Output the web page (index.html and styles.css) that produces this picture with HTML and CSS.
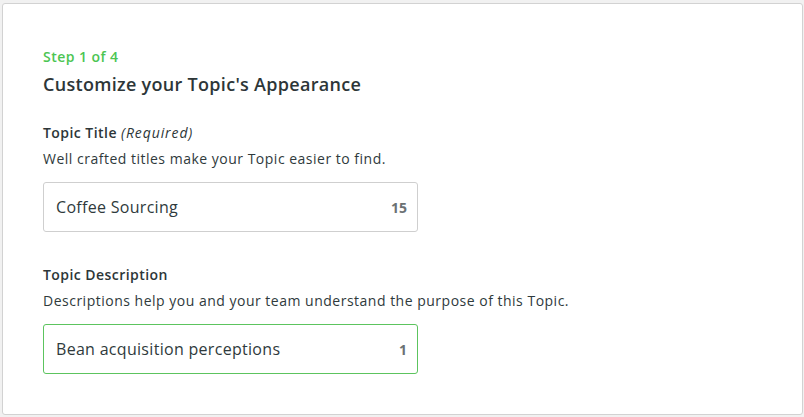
FILE: index.html
```html
<!DOCTYPE html>
<html>
<head>
<meta charset="utf-8">
<link rel="stylesheet" href="styles.css">
</head>
<body>
<div class="card">
  <div class="step">Step 1 of 4</div>
  <h1 class="heading">Customize your Topic's Appearance</h1>

  <div class="field">
    <div class="label">Topic Title <em>(Required)</em></div>
    <div class="help">Well crafted titles make your Topic easier to find.</div>
    <div class="input">
      <span class="value">Coffee Sourcing</span>
      <span class="count">15</span>
    </div>
  </div>

  <div class="field">
    <div class="label">Topic Description</div>
    <div class="help">Descriptions help you and your team understand the purpose of this Topic.</div>
    <div class="input input-active">
      <span class="value">Bean acquisition perceptions</span>
      <span class="count">1</span>
    </div>
  </div>
</div>
</body>
</html>
```

FILE: styles.css
```css
html, body {
  margin: 0;
  padding: 0;
}
body {
  background: #f1f1f1;
  padding: 3px 1px 2px 2px;
  font-family: "Open Sans", "Liberation Sans", sans-serif;
  color: #2f3a3c;
  box-sizing: border-box;
  height: 417px;
}
.card {
  box-sizing: border-box;
  height: 412px;
  background: #fff;
  border: 1px solid #d2d2d2;
  border-radius: 3px;
  padding: 44px 40px 0 40px;
}
.step {
  color: #4cc552;
  font-size: 14px;
  font-weight: 600;
  line-height: 18px;
  letter-spacing: 0.45px;
}
.heading {
  margin: 7px 0 0;
  font-size: 18px;
  font-weight: 600;
  line-height: 23px;
  letter-spacing: 0.3px;
  color: #2d3638;
}
.field {
  margin-top: 28px;
}
.field + .field {
  margin-top: 34px;
}
.label {
  font-size: 14px;
  font-weight: 600;
  line-height: 18px;
  letter-spacing: 0.45px;
  color: #2d3638;
}
.label em {
  font-weight: 400;
  font-style: italic;
  letter-spacing: 0.9px;
}
.help {
  margin-top: 8px;
  font-size: 14px;
  line-height: 18px;
  letter-spacing: 0.5px;
  color: #2f3a3c;
}
.input {
  margin-top: 14px;
  box-sizing: border-box;
  width: 375px;
  height: 50px;
  border: 1px solid #cfcfcf;
  border-radius: 3px;
  display: flex;
  align-items: center;
  justify-content: space-between;
  padding: 0 10px 0 12px;
}
.input-active {
  border-color: #5cc45e;
}
.value {
  font-size: 16px;
  letter-spacing: 0.3px;
  color: #2f3a3c;
}
.count {
  font-size: 14px;
  font-weight: 700;
  color: #6b7173;
}
```
